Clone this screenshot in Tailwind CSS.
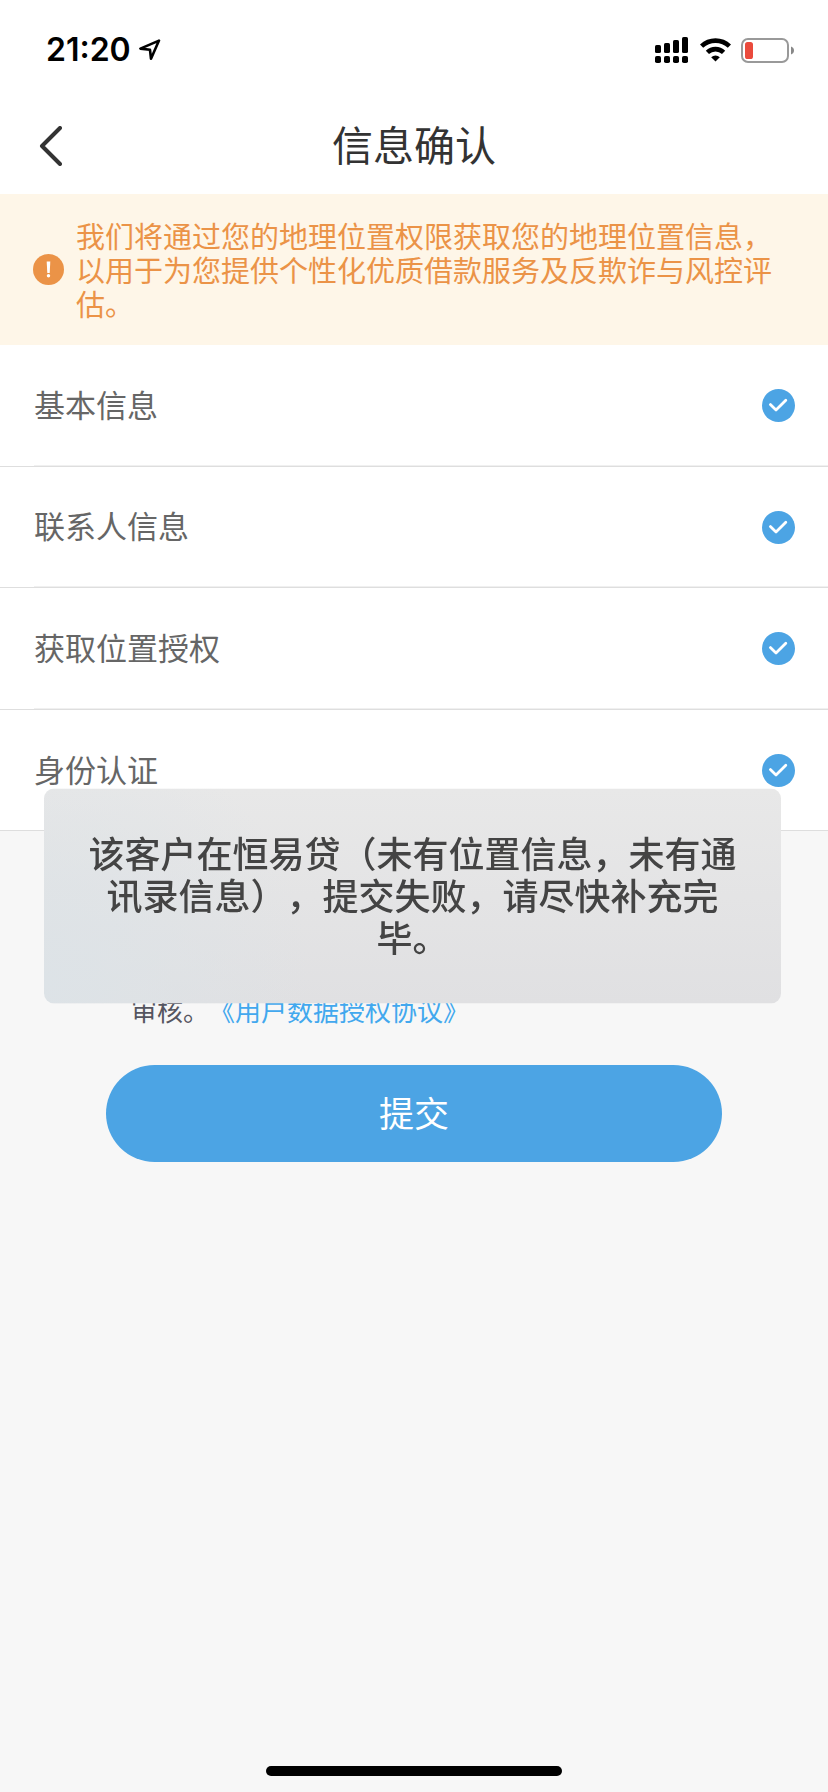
<!DOCTYPE html>
<html lang="zh-CN">
<head>
  <meta charset="UTF-8">
  <title>信息确认</title>
  <meta name="viewport" content="width=device-width, initial-scale=1">
  <script src="https://cdn.jsdelivr.net/npm/@tailwindcss/browser@4"></script>
</head>

<body class="min-h-screen flex flex-col bg-[#f7f7f7] text-[#666] font-['Noto_Sans_CJK_SC',sans-serif] [text-spacing-trim:space-all]">
  <!-- STATUS BAR -->
  <div class="h-24 bg-white pl-[46px] pr-[34px] pt-1 flex items-center justify-between text-black">
    <div class="flex items-center gap-2">
      <span class="font-[Inter,sans-serif] text-[32px] leading-10 font-semibold">21:20</span>
      <svg class="w-[22px] h-[22px]" viewBox="0 0 22 22" fill="none" stroke="currentColor" stroke-width="2.6" stroke-linejoin="round">
        <path d="M20 1.6 1.4 9.6l9.6 1.2 1 9z"/>
      </svg>
    </div>
    <div class="flex items-center gap-3">
      <svg class="w-[33px] h-[26px]" viewBox="0 0 33 26" fill="currentColor">
        <rect x="0" y="8" width="6" height="8" rx="1.6"/>
        <rect x="9" y="6" width="6" height="10" rx="1.6"/>
        <rect x="18" y="3" width="6" height="13" rx="1.6"/>
        <rect x="27" y="0" width="6" height="16" rx="1.6"/>
        <rect x="0" y="19" width="6" height="7" rx="1.8"/>
        <rect x="9" y="19" width="6" height="7" rx="1.8"/>
        <rect x="18" y="19" width="6" height="7" rx="1.8"/>
        <rect x="27" y="19" width="6" height="7" rx="1.8"/>
      </svg>
      <svg class="w-[31px] h-[24px]" viewBox="0 0 31 24" fill="none" stroke="currentColor" stroke-width="4.6">
        <path d="M1.6 8.2a20 20 0 0 1 27.8 0"/>
        <path d="M7.4 14.4a11.6 11.6 0 0 1 16.2 0"/>
        <path d="M11.2 19.2a6.4 6.4 0 0 1 8.6 0L15.5 23.6z" fill="currentColor" stroke="none"/>
      </svg>
      <svg class="w-[53px] h-[25px] -ml-[2px]" viewBox="0 0 53 25">
        <rect x="1" y="1" width="46" height="23" rx="6" fill="none" stroke="#999" stroke-width="2"/>
        <path d="M50 8.5c4 1.2 4 6.8 0 8z" fill="#888"/>
        <rect x="4" y="4" width="8" height="17" rx="2.6" fill="#ea4a3c"/>
      </svg>
    </div>
  </div>

  <!-- NAV -->
  <header class="h-[98px] bg-white px-[38px] grid grid-cols-[1fr_auto_1fr] items-center">
    <button type="button" aria-label="返回" class="pt-[2px] justify-self-start text-[#333]">
      <svg class="w-6 h-10" viewBox="0 0 24 40" fill="none" stroke="currentColor" stroke-width="4" stroke-linecap="round" stroke-linejoin="round">
        <path d="M22 2 4 20l18 18"/>
      </svg>
    </button>
    <h1 class="pb-1 text-[41px] leading-[48px] text-[#333]">信息确认</h1>
  </header>

  <!-- NOTICE -->
  <section class="bg-[#fef6e8] pl-[33px] pr-10 pt-6 pb-[25px] flex items-center gap-3 text-[#eb9347]">
    <svg class="w-[31px] h-[31px] shrink-0" viewBox="0 0 31 31">
      <circle cx="15.5" cy="15.5" r="15.5" fill="#eb9347"/>
      <path d="M13.7 7.5h3.6l-.6 11.5h-2.4z" fill="#fff"/>
      <circle cx="15.5" cy="21.8" r="1.7" fill="#fff"/>
    </svg>
    <p class="text-[29px] leading-[34px]">我们将通过您的地理位置权限获取您的地理位置信息，以用于为您提供个性化优质借款服务及反欺诈与风控评估。</p>
  </section>

  <!-- STEPS -->
  <ul class="h-[486px] bg-white flex flex-col text-[31px] leading-10">
    <li class="flex-1 border-b border-[#dedede] pl-[34px]">
      <div class="h-full pt-[2px] pr-[33px] border-b border-[#f0f0f0] flex items-center justify-between">
        <span class="pb-1">基本信息</span>
        <svg class="w-[33px] h-[33px]" viewBox="0 0 33 33" fill="none"><circle cx="16.5" cy="16.5" r="16.5" fill="#4ca4e4"/><path d="M8.4 15.6l5.6 5.4 9.8-9.8" stroke="#fff" stroke-width="2.8" stroke-linecap="round" stroke-linejoin="round"/></svg>
      </div>
    </li>
    <li class="flex-1 border-b border-[#dedede] pl-[34px]">
      <div class="h-full pt-[2px] pr-[33px] border-b border-[#f0f0f0] flex items-center justify-between">
        <span class="pb-1">联系人信息</span>
        <svg class="w-[33px] h-[33px]" viewBox="0 0 33 33" fill="none"><circle cx="16.5" cy="16.5" r="16.5" fill="#4ca4e4"/><path d="M8.4 15.6l5.6 5.4 9.8-9.8" stroke="#fff" stroke-width="2.8" stroke-linecap="round" stroke-linejoin="round"/></svg>
      </div>
    </li>
    <li class="flex-1 border-b border-[#dedede] pl-[34px]">
      <div class="h-full pt-[2px] pr-[33px] border-b border-[#f0f0f0] flex items-center justify-between">
        <span class="pb-1">获取位置授权</span>
        <svg class="w-[33px] h-[33px]" viewBox="0 0 33 33" fill="none"><circle cx="16.5" cy="16.5" r="16.5" fill="#4ca4e4"/><path d="M8.4 15.6l5.6 5.4 9.8-9.8" stroke="#fff" stroke-width="2.8" stroke-linecap="round" stroke-linejoin="round"/></svg>
      </div>
    </li>
    <li class="flex-1 border-b border-[#dedede] pl-[34px]">
      <div class="h-full pt-[2px] pr-[33px] flex items-center justify-between">
        <span class="pb-1">身份认证</span>
        <svg class="w-[33px] h-[33px]" viewBox="0 0 33 33" fill="none"><circle cx="16.5" cy="16.5" r="16.5" fill="#4ca4e4"/><path d="M8.4 15.6l5.6 5.4 9.8-9.8" stroke="#fff" stroke-width="2.8" stroke-linecap="round" stroke-linejoin="round"/></svg>
      </div>
    </li>
  </ul>

  <!-- AGREEMENT + SUBMIT -->
  <main class="flex-1 px-[106px] pt-[162px] flex flex-col gap-[38px]">
    <p class="pl-[25px] text-[26px] leading-[34px] text-[#555560]">审核。<a href="#" class="text-[#42a8ee]">《用户数据授权协议》</a></p>
    <button type="button" class="h-[97px] pb-1 rounded-full bg-[#4ca4e4] text-white text-[35px] leading-[48px]">提交</button>
  </main>

  <!-- HOME INDICATOR -->
  <div class="mb-4 self-center w-[296px] h-[10px] rounded-full bg-black"></div>

  <!-- TOAST -->
  <div role="alert" class="fixed left-11 right-[47px] top-1/2 -translate-y-1/2 px-10 pt-[42px] pb-[47px] rounded-[10px] bg-[radial-gradient(circle_at_0%_90%,#dde3e7,transparent_35%),linear-gradient(#e8e8e8,#e0e0e2)] text-center text-[36px] leading-[42px] font-medium text-[#444]">
    该客户在恒易贷（未有位置信息，未有通讯录信息），提交失败，请尽快补充完毕。
  </div>
</body>
</html>
